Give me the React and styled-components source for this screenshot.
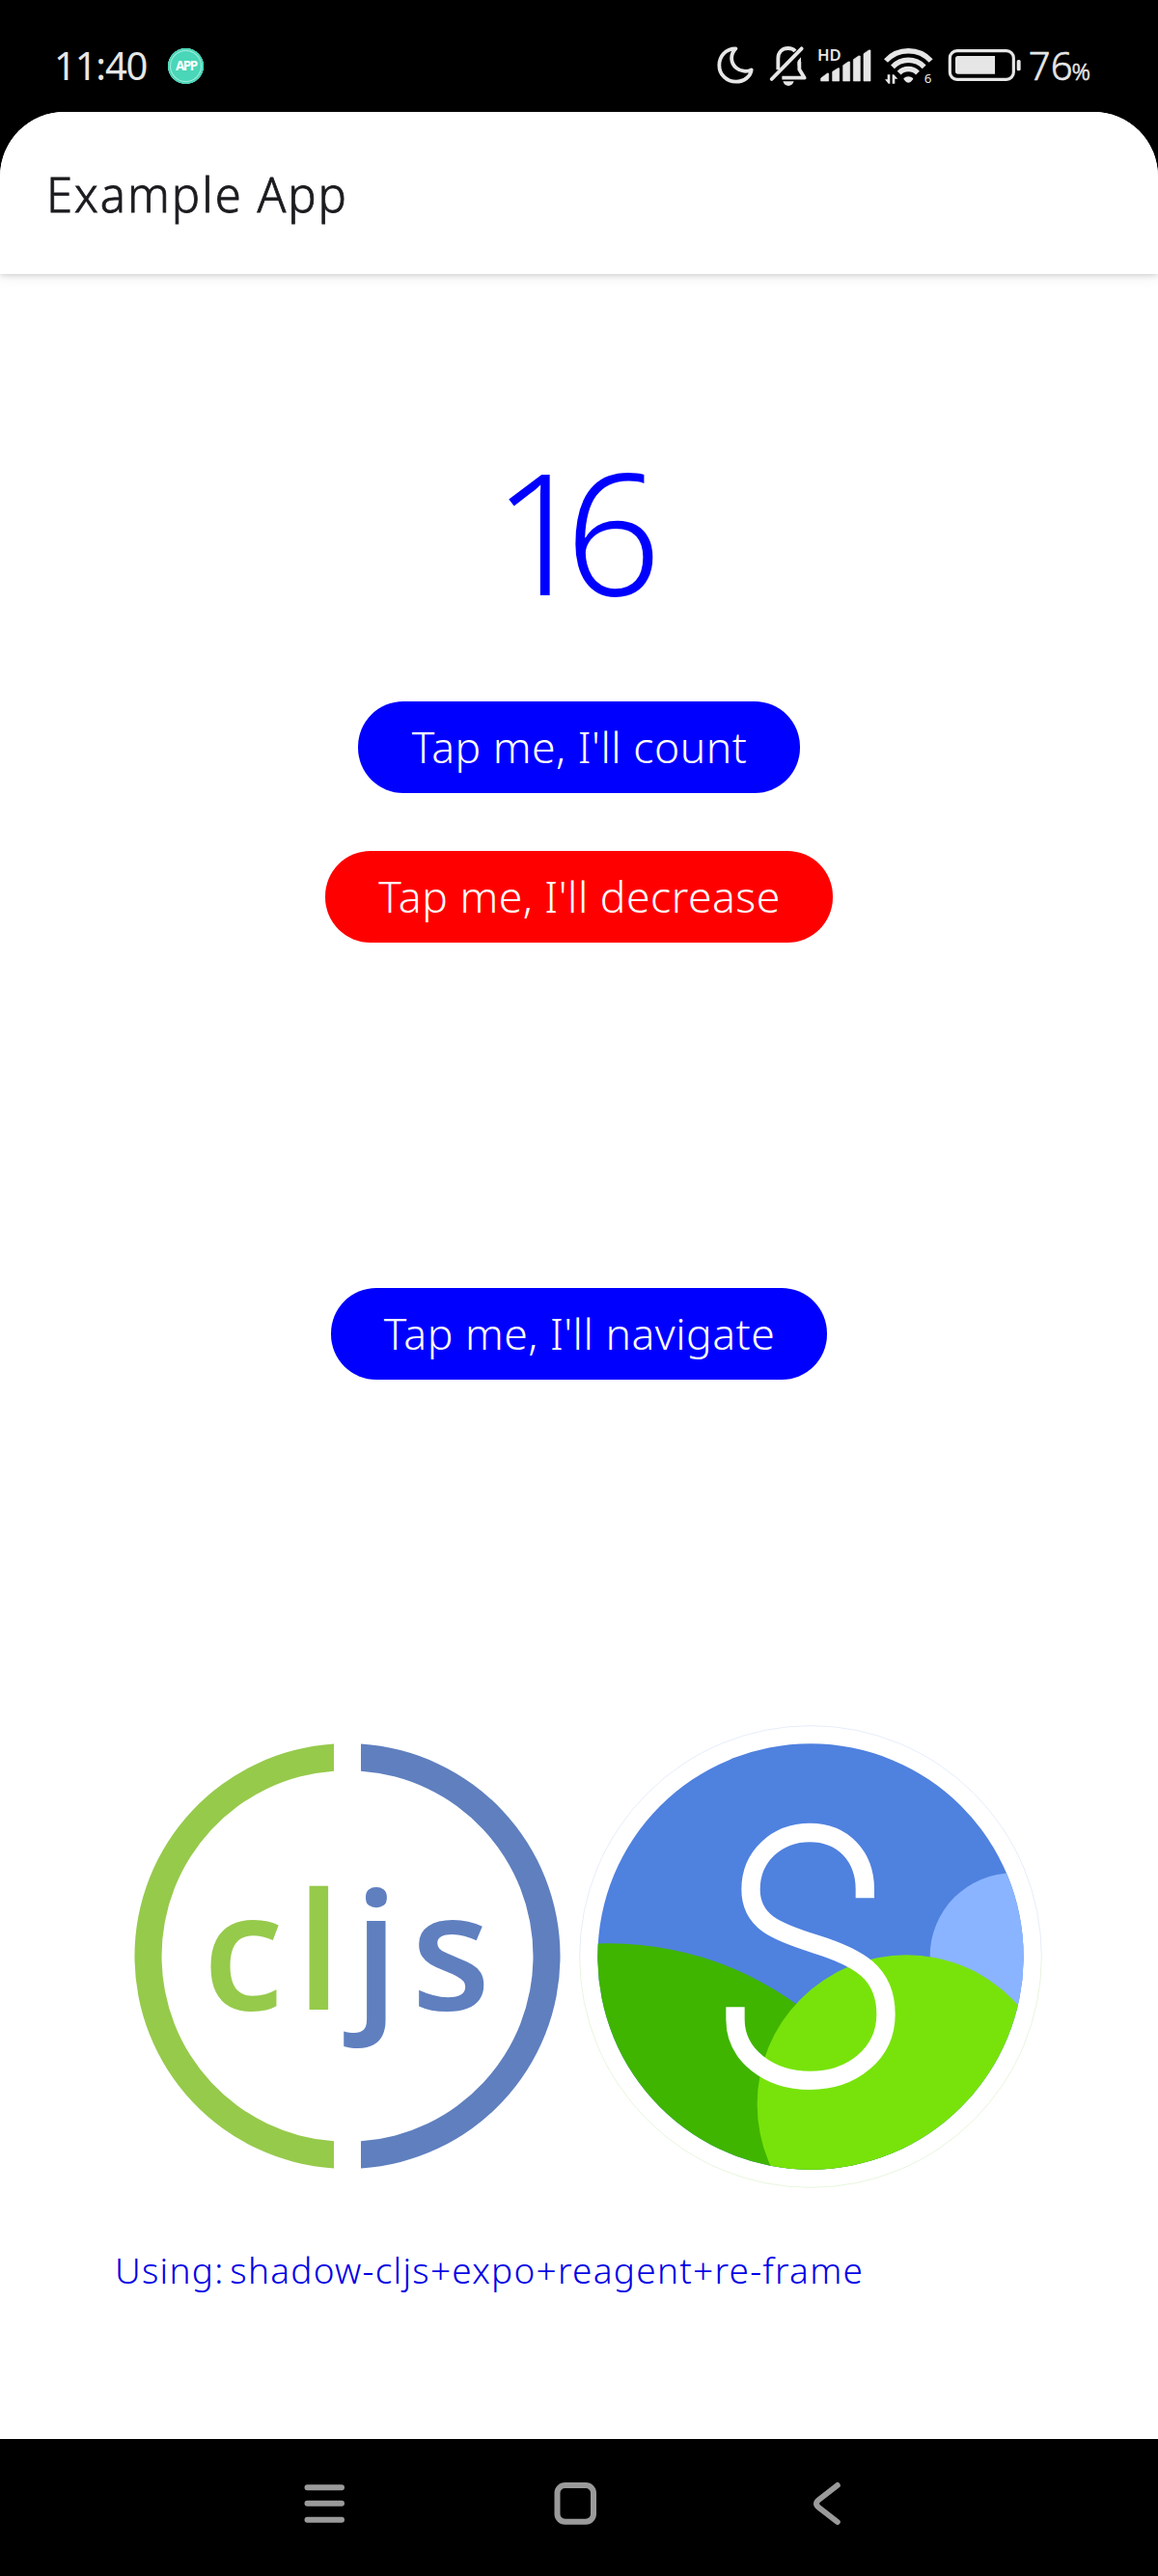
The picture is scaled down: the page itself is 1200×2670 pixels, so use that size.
import React from 'react';
import styled, { createGlobalStyle } from 'styled-components';

const FONT = '"Noto Sans", "Open Sans", sans-serif';
const STATUS = '#e6e6e6';
const NAV = '#9a9a9a';

const GlobalStyle = createGlobalStyle`
  * { box-sizing: border-box; }
  body { margin: 0; background: #000; font-family: ${FONT}; }
  svg { display: block; flex: none; }
`;

const Screen = styled.div`
  width: 1200px;
  height: 2670px;
  display: flex;
  flex-direction: column;
  background: #000;
  overflow: hidden;
`;

const StatusBar = styled.div`
  height: 116px;
  flex: none;
  display: flex;
  align-items: center;
  justify-content: space-between;
  padding: 20px 70px 0 56px;
  color: ${STATUS};
`;

const StatusGroup = styled.div`
  display: flex;
  align-items: center;
`;

const Clock = styled.span`
  font-size: 40px;
  line-height: 48px;
  letter-spacing: -1.2px;
`;

const AppBadge = styled.span`
  display: flex;
  align-items: center;
  justify-content: center;
  width: 37px;
  height: 37px;
  margin-left: 22px;
  border-radius: 50%;
  background: #4ad6b8;
  box-shadow: inset 0 0 0 2px #4ad6b8, inset 0 0 0 3px #a4efdf;
  color: #fff;
  font-size: 13.5px;
  font-weight: 700;
  line-height: 37px;
  letter-spacing: -1.5px;
`;

const StatusIcon = styled.svg`
  width: ${(p) => p.$w}px;
  height: 44px;
  margin-right: ${(p) => p.$gap}px;
`;

const Battery = styled.span`
  font-size: 40px;
  line-height: 48px;
  font-weight: 300;
  -webkit-text-stroke: 0.6px ${STATUS};
`;

const Percent = styled.span`
  margin-left: -1px;
  font-size: 24px;
  line-height: 1;
`;

const Sheet = styled.main`
  height: 2412px;
  flex: none;
  display: flex;
  flex-direction: column;
  border-radius: 67px 67px 0 0;
  background: #fff;
  overflow: hidden;
`;

const Header = styled.header`
  height: 168px;
  flex: none;
  display: flex;
  align-items: center;
  padding: 1px 0 0 48px;
  background: #fff;
  box-shadow: 0 1px 6px rgba(0, 0, 0, 0.17), 0 4px 14px rgba(0, 0, 0, 0.06);
`;

const Title = styled.h1`
  margin: 0;
  color: #1c1b1f;
  font-size: 49px;
  font-weight: 300;
  line-height: 66px;
  letter-spacing: 2px;
  -webkit-text-stroke: 0.8px #1c1b1f;
`;

const Body = styled.section`
  display: flex;
  flex-direction: column;
  align-items: center;
  padding-top: 165px;
`;

const Counter = styled.div`
  height: 200px;
  margin: 0 29px 78px 0;
  color: #0000ff;
  font-size: 175px;
  font-weight: 300;
  line-height: 200px;
  letter-spacing: -25px;
`;

const PillButton = styled.button`
  height: 95px;
  margin: 0 0 ${(p) => p.$after}px;
  padding: 0 54.2px 1px 55.2px;
  border: 0;
  border-radius: 47px;
  background: ${(p) => p.$color};
  color: #fff;
  font-family: ${FONT};
  font-size: 44.5px;
  font-weight: 300;
  line-height: 94px;
  letter-spacing: 0.5px;
  white-space: nowrap;
`;

const Logos = styled.div`
  align-self: stretch;
  display: flex;
  padding-left: 120px;
  margin-bottom: 48px;
`;

const Footnote = styled.p`
  align-self: flex-start;
  margin: 0 0 0 119px;
  color: #0000e6;
  font-size: 37px;
  font-weight: 300;
  line-height: 50px;
  letter-spacing: 1.25px;
  word-spacing: -5px;
  white-space: nowrap;
`;

const NavBar = styled.nav`
  height: 142px;
  flex: none;
  display: flex;
  align-items: center;
  gap: 212.5px;
  padding: 0 0 8px 312px;
`;

const MoonIcon = () => (
  <StatusIcon $w={44} $gap={11} viewBox="18 18 132 132" fill="none" stroke={STATUS} strokeWidth="11.5" strokeLinejoin="round">
    <path d="M82 31C51 31 31 55 31 83C31 113 55 134 83 134C108 134 129 118 131 97C118 104 98 103 84 91C66 76 64 50 82 31Z" />
  </StatusIcon>
);

const MutedBellIcon = () => (
  <StatusIcon $w={44} $gap={6} viewBox="183 18 132 132" fill="none" stroke={STATUS} strokeWidth="11.500" strokeLinecap="round" strokeLinejoin="round">
    <path d="M214 97V62C214 42 227 30 245 30C254 30 262 33 267 39" strokeLinecap="butt" />
    <path d="M194 126L287 31" />
    <path d="M280 72V96L296 122H226" strokeLinecap="butt" />
    <path d="M285 58V94L275 82V69Z" fill={STATUS} stroke="none" />
    <path d="M229 133H263C260 142 254 147 246 147C238 147 232 142 229 133Z" fill={STATUS} stroke="none" />
  </StatusIcon>
);

const SignalIcon = () => (
  <StatusIcon $w={58} $gap={10} viewBox="18 18 174 132" fill={STATUS}>
    <text x="21" y="68" fontFamily={FONT} fontSize="50" fontWeight="600">HD</text>
    <path d="M32 123L52 108H56V132H32ZM68 103L85 92H89V132H68ZM101 83L117 72H122V132H101ZM133 65L149 54H154V132H133ZM165 47L181 36H186V132H165Z" stroke={STATUS} strokeWidth="2" strokeLinejoin="round" />
  </StatusIcon>
);

const WifiIcon = () => (
  <StatusIcon $w={54} $gap={13} viewBox="222 18 162 132" fill={STATUS}>
    <g fill="none" stroke={STATUS} strokeWidth="16">
      <path d="M234 69A95 95 0 0 1 374 69" />
      <path d="M255 88A67 67 0 0 1 353 88" />
      <path d="M275 107A40 40 0 0 1 333 107" />
    </g>
    <path d="M289 124C297 116 311 116 319 124C318 129 311 137 304 137C297 137 290 129 289 124Z" />
    <path d="M239 112H247V140H242L231 127H239ZM254 140V112H259L271 125H262V140Z" />
    <text x="353" y="138" fontFamily={FONT} fontSize="40">6</text>
  </StatusIcon>
);

const BatteryIcon = () => (
  <StatusIcon $w={78} $gap={7} viewBox="243 48 234 132">
    <rect x="253" y="68" width="198" height="89" rx="22" fill="none" stroke={STATUS} strokeWidth="9.500" />
    <path d="M278 84H393V140H278Q270 140 270 132V92Q270 84 278 84Z" fill={STATUS} />
    <rect x="461" y="96" width="12" height="34" rx="5" fill={STATUS} />
  </StatusIcon>
);

const CljsLogo = () => (
  <svg width="470" height="510" viewBox="0 0 1410 1530" fontFamily='"Open Sans", "Noto Sans", sans-serif' fontSize="507" fontWeight="600">
    <g fill="#96ca4b">
      <path d="M678 112.8A661 661 0 0 0 678 1432.2V1348A577 577 0 0 1 678 197Z" />
      <text x="270" y="938">c</text>
      <text x="560" y="938">l</text>
    </g>
    <g fill="#5f7fbf">
      <path d="M762 112.8A661 661 0 0 1 762 1432.2V1348A577 577 0 0 0 762 197Z" />
      <text x="739" y="938">j</text>
      <text x="918" y="938">s</text>
    </g>
  </svg>
);

const ShadowLogo = () => (
  <svg width="510" height="510" viewBox="0 0 1530 1530">
    <defs>
      <clipPath id="disc"><circle cx="750" cy="774" r="662" /></clipPath>
      <linearGradient id="rim" x1="0" y1="0" x2="0" y2="1">
        <stop offset="0.47" stopColor="#dfe8f8" />
        <stop offset="0.53" stopColor="#e0f3d4" />
      </linearGradient>
    </defs>
    <circle cx="750" cy="774" r="718" fill="none" stroke="url(#rim)" strokeWidth="2.4" />
    <g clipPath="url(#disc)">
      <rect width="1530" height="1530" fill="#4f81df" />
      <circle cx="1380" cy="773" r="259" fill="#8ab4ff" />
      <circle cx="125" cy="1720" r="987" fill="#3fb500" />
      <circle cx="1048" cy="1233" r="464" fill="#78e30b" />
    </g>
    <path
      d="M919 592V565C919 462 850 388.500 748 388.500C645 388.500 564 462 564 565C564 665 640 696 765 735C900 777 984 825 984 953C984 1075 880 1159 748 1159C620 1159 516 1080 516 970V931"
      fill="none"
      stroke="#fff"
      strokeWidth="58"
    />
  </svg>
);

const NavIcon = ({ children }) => (
  <svg width="48" height="48" viewBox="0 0 48 48" fill="none" stroke={NAV} strokeWidth="6" strokeLinecap="round" strokeLinejoin="round">
    {children}
  </svg>
);

export default function App() {
  return (
    <Screen>
      <GlobalStyle />
      <StatusBar>
        <StatusGroup>
          <Clock>11:40</Clock>
          <AppBadge>APP</AppBadge>
        </StatusGroup>
        <StatusGroup>
          <MoonIcon />
          <MutedBellIcon />
          <SignalIcon />
          <WifiIcon />
          <BatteryIcon />
          <Battery>76<Percent>%</Percent></Battery>
        </StatusGroup>
      </StatusBar>
      <Sheet>
        <Header>
          <Title>Example App</Title>
        </Header>
        <Body>
          <Counter>16</Counter>
          <PillButton $color="#0000ff" $after={60}>Tap me, I'll count</PillButton>
          <PillButton $color="#ff0000" $after={358}>Tap me, I'll decrease</PillButton>
          <PillButton $color="#0000ff" $after={340}>Tap me, I'll navigate</PillButton>
          <Logos>
            <CljsLogo />
            <ShadowLogo />
          </Logos>
          <Footnote>Using: shadow-cljs+expo+reagent+re-frame</Footnote>
        </Body>
      </Sheet>
      <NavBar>
        <NavIcon><path d="M6.500 7.200H42M6.500 23.800H42M6.500 40.700H42" /></NavIcon>
        <NavIcon><rect x="4.5" y="5" width="37.5" height="37.7" rx="8" /></NavIcon>
        <NavIcon><path d="M34.800 5L15.500 20Q10.500 24 15.500 28L34.800 43" /></NavIcon>
      </NavBar>
    </Screen>
  );
}
